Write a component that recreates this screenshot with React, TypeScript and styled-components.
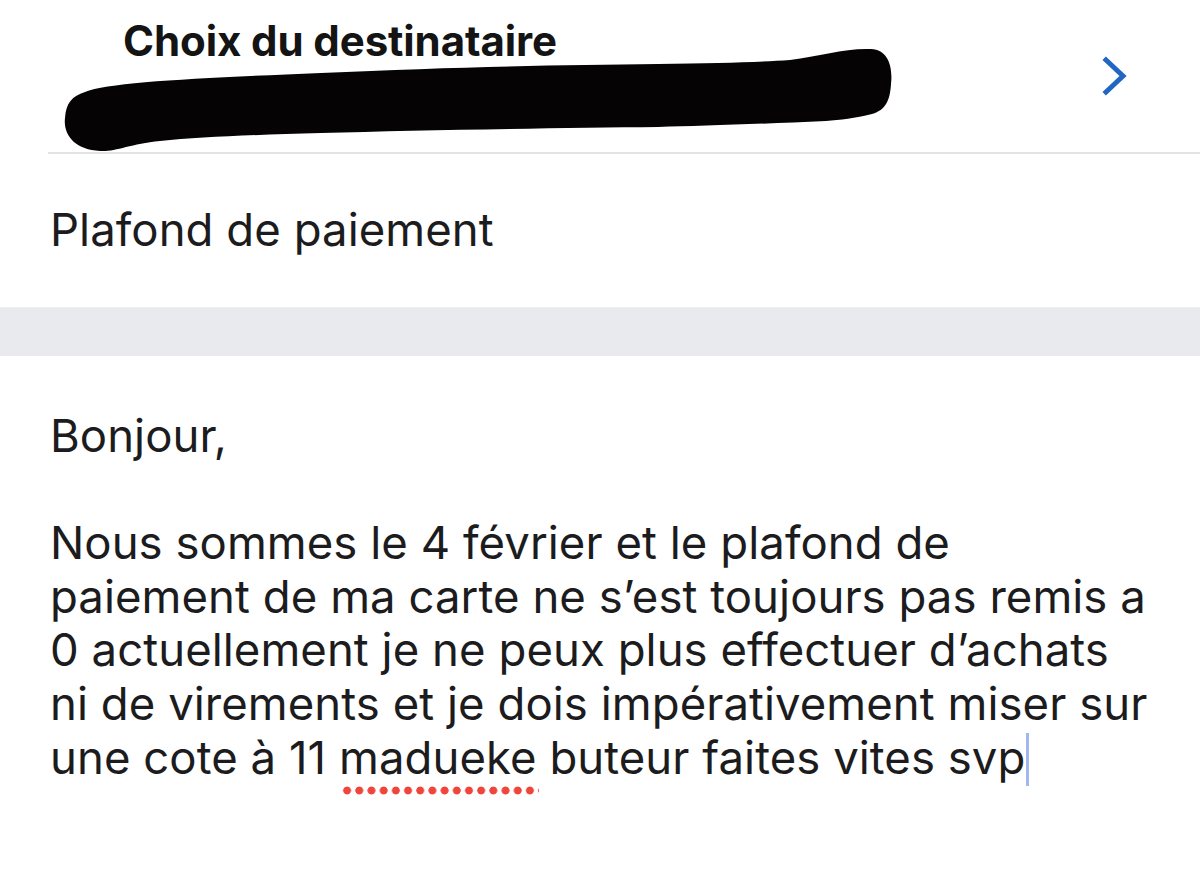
import React from "react";
import styled, { createGlobalStyle } from "styled-components";

const Global = createGlobalStyle`
  html, body { margin: 0; padding: 0; background: #ffffff; }
  body { font-family: Inter, "Noto Sans", "Liberation Sans", sans-serif; color: #1c1c1e; -webkit-font-smoothing: antialiased; }
`;

const Screen = styled.div`
  width: 1200px;
  height: 883px;
  overflow: hidden;
  background: #ffffff;
  display: flex;
  flex-direction: column;
`;

const RecipientRow = styled.div`
  position: relative;
  height: 152px;
  display: flex;
  align-items: flex-start;
  justify-content: space-between;
  margin-left: 48px;
  border-bottom: 2px solid #e1e3e6;
`;

const RecipientText = styled.div`
  display: flex;
  flex-direction: column;
  padding-left: 75px;
  padding-top: 18px;
`;

const Title = styled.div`
  font-weight: 700;
  font-size: 42px;
  line-height: 46px;
  letter-spacing: -0.1px;
  color: #141414;
`;

const Name = styled.div`
  height: 60px;
  font-size: 36px;
  color: #1c1c1e;
`;

const Redaction = styled.svg`
  position: absolute;
  left: 0;
  top: 0;
  pointer-events: none;
`;

const Chevron = styled.svg`
  margin-top: 56px;
  margin-right: 70px;
`;

const SettingRow = styled.div`
  height: 153px;
  display: flex;
  align-items: center;
  padding-left: 50px;
  box-sizing: border-box;
  padding-bottom: 2px;
  font-size: 45.5px;
  letter-spacing: 0.05px;
  color: #1c1c1e;
`;

const Band = styled.div`
  height: 48px;
  background: #e8eaed;
  border-top: 1px solid #eef0f2;
`;

const Message = styled.div`
  padding: 53px 0 0 50px;
  font-size: 45.5px;
  line-height: 53.6px;
  letter-spacing: 0.05px;
  white-space: nowrap;
  color: #1c1c1e;
`;

const Misspelled = styled.span`
  position: relative;
  &::after {
    content: "";
    position: absolute;
    left: 2px;
    right: -2px;
    bottom: -10px;
    height: 9px;
    background-image: radial-gradient(circle at center, #f0453a 3.6px, transparent 4.3px);
    background-size: 12.2px 9px;
    background-repeat: repeat-x;
  }
`;

const Caret = styled.span`
  display: inline-block;
  width: 3px;
  height: 53px;
  margin-left: 1px;
  vertical-align: -12px;
  background: #a3b6ef;
`;

export default function App() {
  return (
    <>
      <Global />
      <Screen>
        <RecipientRow>
          <RecipientText>
            <Title>Choix du destinataire</Title>
            <Name>&nbsp;</Name>
          </RecipientText>
          <Redaction width="860" height="152" viewBox="48 0 860 152">
            <path
              d="M 85 92 C 110 82, 200 78, 321 73 C 450 67, 560 65, 658 64 C 720 63, 760 62, 790 60 C 820 56, 845 48, 871 49 C 888 50, 893 66, 891 84 C 890 100, 886 110, 872 114 C 855 118, 840 120, 826 121 C 760 124, 700 126, 658 127 C 560 128, 420 130, 321 133 C 250 135, 200 137, 160 141 C 130 144, 115 152, 100 151 C 75 150, 63 135, 65 118 C 66 103, 72 96, 85 92 Z"
              fill="#050304"
            />
          </Redaction>
          <Chevron width="30" height="40" viewBox="0 0 30 40">
            <path d="M6 4 L23 20 L6 36" fill="none" stroke="#2266c4" strokeWidth="5" strokeLinecap="square" strokeLinejoin="miter" />
          </Chevron>
        </RecipientRow>
        <SettingRow>Plafond de paiement</SettingRow>
        <Band />
        <Message>
          Bonjour,
          <br />
          <br />
          Nous sommes le 4 février et le plafond de
          <br />
          paiement de ma carte ne s’est toujours pas remis a
          <br />
          0 actuellement je ne peux plus effectuer d’achats
          <br />
          ni de virements et je dois impérativement miser sur
          <br />
          une cote à 11 <Misspelled>madueke</Misspelled> buteur faites vites svp
          <Caret />
        </Message>
      </Screen>
    </>
  );
}
